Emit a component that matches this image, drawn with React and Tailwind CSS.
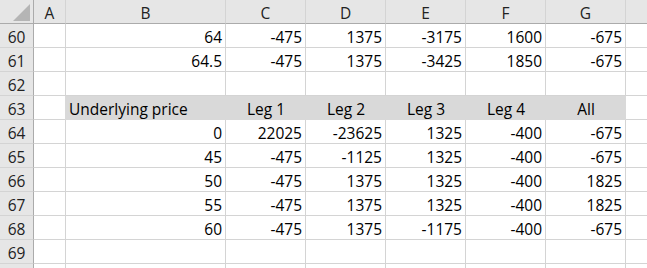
const widths = [32, 160, 80, 80, 80, 80, 80];
const letters = ["A", "B", "C", "D", "E", "F", "G"];

const rows = [
  { n: 60, cells: ["", "64", "-475", "1375", "-3175", "1600", "-675"] },
  { n: 61, cells: ["", "64.5", "-475", "1375", "-3425", "1850", "-675"] },
  { n: 62, cells: ["", "", "", "", "", "", ""] },
  { n: 63, head: true },
  { n: 64, cells: ["", "0", "22025", "-23625", "1325", "-400", "-675"] },
  { n: 65, cells: ["", "45", "-475", "-1125", "1325", "-400", "-675"] },
  { n: 66, cells: ["", "50", "-475", "1375", "1325", "-400", "1825"] },
  { n: 67, cells: ["", "55", "-475", "1375", "1325", "-400", "1825"] },
  { n: 68, cells: ["", "60", "-475", "1375", "-1175", "-400", "-675"] },
  { n: 69, cells: ["", "", "", "", "", "", ""] },
  // row 70 is only a few pixels tall in view, its number sits below the edge
  { n: "", cells: ["", "", "", "", "", "", ""] },
];

const RowNum = ({ n }) => (
  <div className="flex h-6 w-[34px] shrink-0 items-end justify-center border-r border-b border-r-[#ababab] border-b-[#d4d4d4] bg-[#e6e6e6] leading-[20px] text-[#222]">
    {n}
  </div>
);

const Cell = ({ w, children }) => (
  <div style={{ width: w }} className="flex h-6 shrink-0 items-end justify-end border-r border-b border-[#d4d4d4] pr-[3px] leading-[20px]">
    {children}
  </div>
);

export default function App() {
  return (
    <div className="h-[268px] w-[647px] overflow-hidden bg-white text-[15.5px] text-black" style={{ fontFamily: "'Open Sans', sans-serif" }}>
      <div className="flex h-6">
        <div className="relative h-6 w-[34px] shrink-0 border-r border-b border-[#ababab] bg-[#e6e6e6]">
          <svg className="absolute left-0 top-0" width="33" height="23" viewBox="0 0 33 23">
            <polygon points="13,21 30,21 30,4" fill="#b5b5b5" />
          </svg>
        </div>
        {letters.map((l, i) => (
          <div key={l} style={{ width: widths[i] }} className="flex h-6 shrink-0 items-end justify-center border-r border-b border-r-[#d4d4d4] border-b-[#ababab] bg-[#e6e6e6] leading-[20px] text-[#222]">
            {l}
          </div>
        ))}
        <div className="h-6 flex-1 border-b border-[#ababab] bg-[#e6e6e6]" />
      </div>
      {rows.map((r, idx) =>
        r.head ? (
          <div key={idx} className="flex h-6">
            <RowNum n={r.n} />
            <div className="h-6 w-[31px] shrink-0 border-b border-[#d4d4d4]" />
            <div className="flex h-6 w-[561px] shrink-0 items-end bg-[#d9d9d9] leading-[21px]">
              <div className="w-[161px] pl-[4px]">Underlying price</div>
              {["Leg 1", "Leg 2", "Leg 3", "Leg 4", "All"].map((t) => (
                <div key={t} className="w-[80px] text-center">{t}</div>
              ))}
            </div>
            <div className="h-6 flex-1 border-b border-[#d4d4d4]" />
          </div>
        ) : (
          <div key={idx} className="flex h-6">
            <RowNum n={r.n} />
            {r.cells.map((c, i) => (
              <Cell key={i} w={widths[i]}>{c}</Cell>
            ))}
            <div className="h-6 flex-1 border-b border-[#d4d4d4]" />
          </div>
        )
      )}
    </div>
  );
}
